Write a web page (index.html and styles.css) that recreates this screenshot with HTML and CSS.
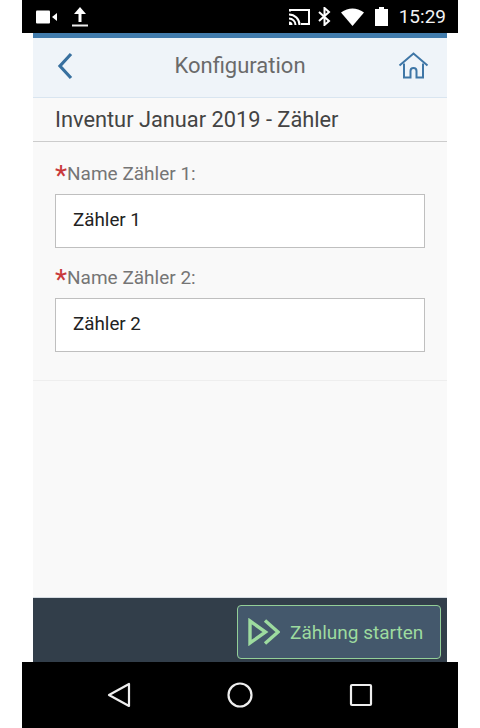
FILE: index.html
```html
<!DOCTYPE html>
<html lang="de">
<head>
  <meta charset="UTF-8" />
  <title>Konfiguration</title>
  <link rel="stylesheet" href="styles.css">
</head>
<body>
  <div class="phone">
    <div class="status-bar">
      <div class="status-left">
        <svg width="22" height="14" viewBox="0 0 22 14"><rect x="0" y="0.5" width="14" height="13" rx="1" fill="#fff"/><path d="M16 7l5-4v8z" fill="#fff"/></svg>
        <svg width="16" height="20" viewBox="0 0 16 20"><path d="M8 0l6 7H9.500v8h-3V7H2z" fill="#fff"/><rect x="0" y="17.500" width="16" height="2" fill="#eee"/></svg>
      </div>
      <div class="status-right">
        <svg class="ic-cast" width="21" height="18" viewBox="0 0 21 18"><path d="M0 3.500V1h21v16h-9v-2h7V3H2v.5z" fill="#fff"/><path d="M0 6.500a10.500 10.500 0 0 1 10.500 10.500M0 10.500a6.500 6.500 0 0 1 6.500 6.500" fill="none" stroke="#fff" stroke-width="2"/><path d="M0 13.500a3.500 3.500 0 0 1 3.500 3.500H0z" fill="#fff"/></svg>
        <svg width="13" height="19" viewBox="0 0 13 19"><path d="M1 5l10 9-4.500 4V1L11 5 1 14" fill="none" stroke="#fff" stroke-width="2"/></svg>
        <svg width="23" height="18" viewBox="0 0 23 18"><path d="M0 4.500Q11.500-3.500 23 4.500L11.500 18z" fill="#fff"/></svg>
        <svg class="ic-battery" width="13" height="19" viewBox="0 0 13 19"><path d="M4 0h5v2h4v17H0V2h4z" fill="#fff"/></svg>
        <span class="clock">15:29</span>
      </div>
    </div>

    <div class="app">
      <div class="header">
        <svg class="ic-back" width="16" height="28" viewBox="0 0 16 28"><path d="M14 2L3 14l11 12" fill="none" stroke="#38709f" stroke-width="3.200"/></svg>
        <h1>Konfiguration</h1>
        <svg class="ic-home" width="31" height="27" viewBox="0 0 31 27"><path d="M1.500 13.500L15.500 1.500l14 12" fill="none" stroke="#3f76a6" stroke-width="2"/><path d="M6 11.500V25.500h6.500V19a3 3 0 0 1 6 0v6.500H25V11.500" fill="none" stroke="#3f76a6" stroke-width="2"/></svg>
      </div>
      <div class="subheader">Inventur Januar 2019 - Zähler</div>

      <div class="content">
        <form class="form">
          <div class="field">
            <label><span class="req">*</span>Name Zähler 1:</label>
            <div class="input">Zähler 1</div>
          </div>
          <div class="field">
            <label><span class="req">*</span>Name Zähler 2:</label>
            <div class="input">Zähler 2</div>
          </div>
        </form>
      </div>

      <div class="footer">
        <button class="btn-start" type="button">
          <svg width="32" height="28" viewBox="0 0 32 28"><path d="M2 3l15.500 11L2 25z" fill="none" stroke="#9ddb9f" stroke-width="3.400"/><path d="M17 2.500l13 11.500-13 11.500" fill="none" stroke="#9ddb9f" stroke-width="3.400"/></svg>
          <span>Zählung starten</span>
        </button>
      </div>
    </div>

    <div class="nav-bar">
      <svg width="24" height="26" viewBox="0 0 24 26"><path d="M22 2v22L2 13z" fill="none" stroke="#eee" stroke-width="2.200" stroke-linejoin="round"/></svg>
      <svg width="26" height="26" viewBox="0 0 26 26"><circle cx="13" cy="13" r="11.500" fill="none" stroke="#eee" stroke-width="2.200"/></svg>
      <svg width="24" height="24" viewBox="0 0 24 24"><rect x="2" y="2" width="20" height="20" rx="1" fill="none" stroke="#eee" stroke-width="2.200"/></svg>
    </div>
  </div>
</body>
</html>
```

FILE: styles.css
```css
html, body {
  margin: 0;
  padding: 0;
  background: #fff;
  font-family: Roboto, sans-serif;
}
.phone {
  width: 436px;
  height: 728px;
  margin: 0 22px;
  display: flex;
  flex-direction: column;
}

/* android status bar */
.status-bar {
  height: 33px;
  background: #000;
  display: flex;
  justify-content: space-between;
  align-items: center;
  flex-shrink: 0;
}
.status-left {
  display: flex;
  align-items: center;
  gap: 14px;
  padding-left: 14px;
}
.status-right {
  display: flex;
  align-items: center;
  gap: 10px;
  padding-right: 12px;
}
.ic-cast {
  margin-right: -2px;
}
.ic-battery {
  margin-left: 1px;
}
.clock {
  color: #f2f2f2;
  font-size: 19px;
  margin-left: 1px;
}

.app {
  flex: 1;
  margin: 0 11px;
  background: #f9f9f9;
  display: flex;
  flex-direction: column;
  min-height: 0;
}
.header {
  height: 65px;
  box-sizing: border-box;
  border-top: 5px solid #427cac;
  border-bottom: 1px solid #d9e5f0;
  background: #eff4f9;
  display: grid;
  grid-template-columns: 1fr auto 1fr;
  align-items: center;
  padding: 0 18px 4px;
}
.header h1 {
  margin: 0;
  font-size: 22px;
  font-weight: 400;
  color: #6a6a6a;
}
.ic-back {
  margin-left: 6px;
}
.ic-home {
  justify-self: end;
}
.subheader {
  height: 44px;
  box-sizing: border-box;
  border-bottom: 1px solid #ccc;
  padding-left: 22px;
  font-size: 21.8px;
  line-height: 44px;
  color: #444;
}
.content {
  flex: 1;
  min-height: 0;
  border-bottom: 1px solid #d5dbe1;
}
.form {
  padding: 20px 22px 28px;
  border-bottom: 1px solid #eee;
}
.field + .field {
  margin-top: 18px;
}
.field label {
  display: block;
  height: 32px;
  font-size: 19px;
  line-height: 24px;
  color: #757575;
  white-space: nowrap;
}
.req {
  color: #c9393b;
  font-size: 28px;
  line-height: 24px;
  vertical-align: -5px;
}
.input {
  height: 54px;
  box-sizing: border-box;
  border: 1px solid #bfbfbf;
  background: #fff;
  padding-left: 17px;
  font-size: 18.8px;
  line-height: 51px;
  color: #222;
}
.footer {
  height: 64px;
  box-sizing: border-box;
  background: #323e4a;
  display: flex;
  justify-content: flex-end;
  align-items: flex-end;
  padding: 0 6px 3px 0;
}
.btn-start {
  width: 204px;
  height: 54px;
  box-sizing: border-box;
  border: 1px solid #93cf98;
  border-radius: 4px;
  background: #44586c;
  color: #9ddb9f;
  font-family: inherit;
  font-size: 19px;
  display: flex;
  align-items: center;
  gap: 10px;
  padding: 0 0 0 10px;
}
.nav-bar {
  height: 66px;
  background: #000;
  flex-shrink: 0;
  display: flex;
  align-items: center;
  justify-content: space-between;
  padding: 0 85px;
}
```
